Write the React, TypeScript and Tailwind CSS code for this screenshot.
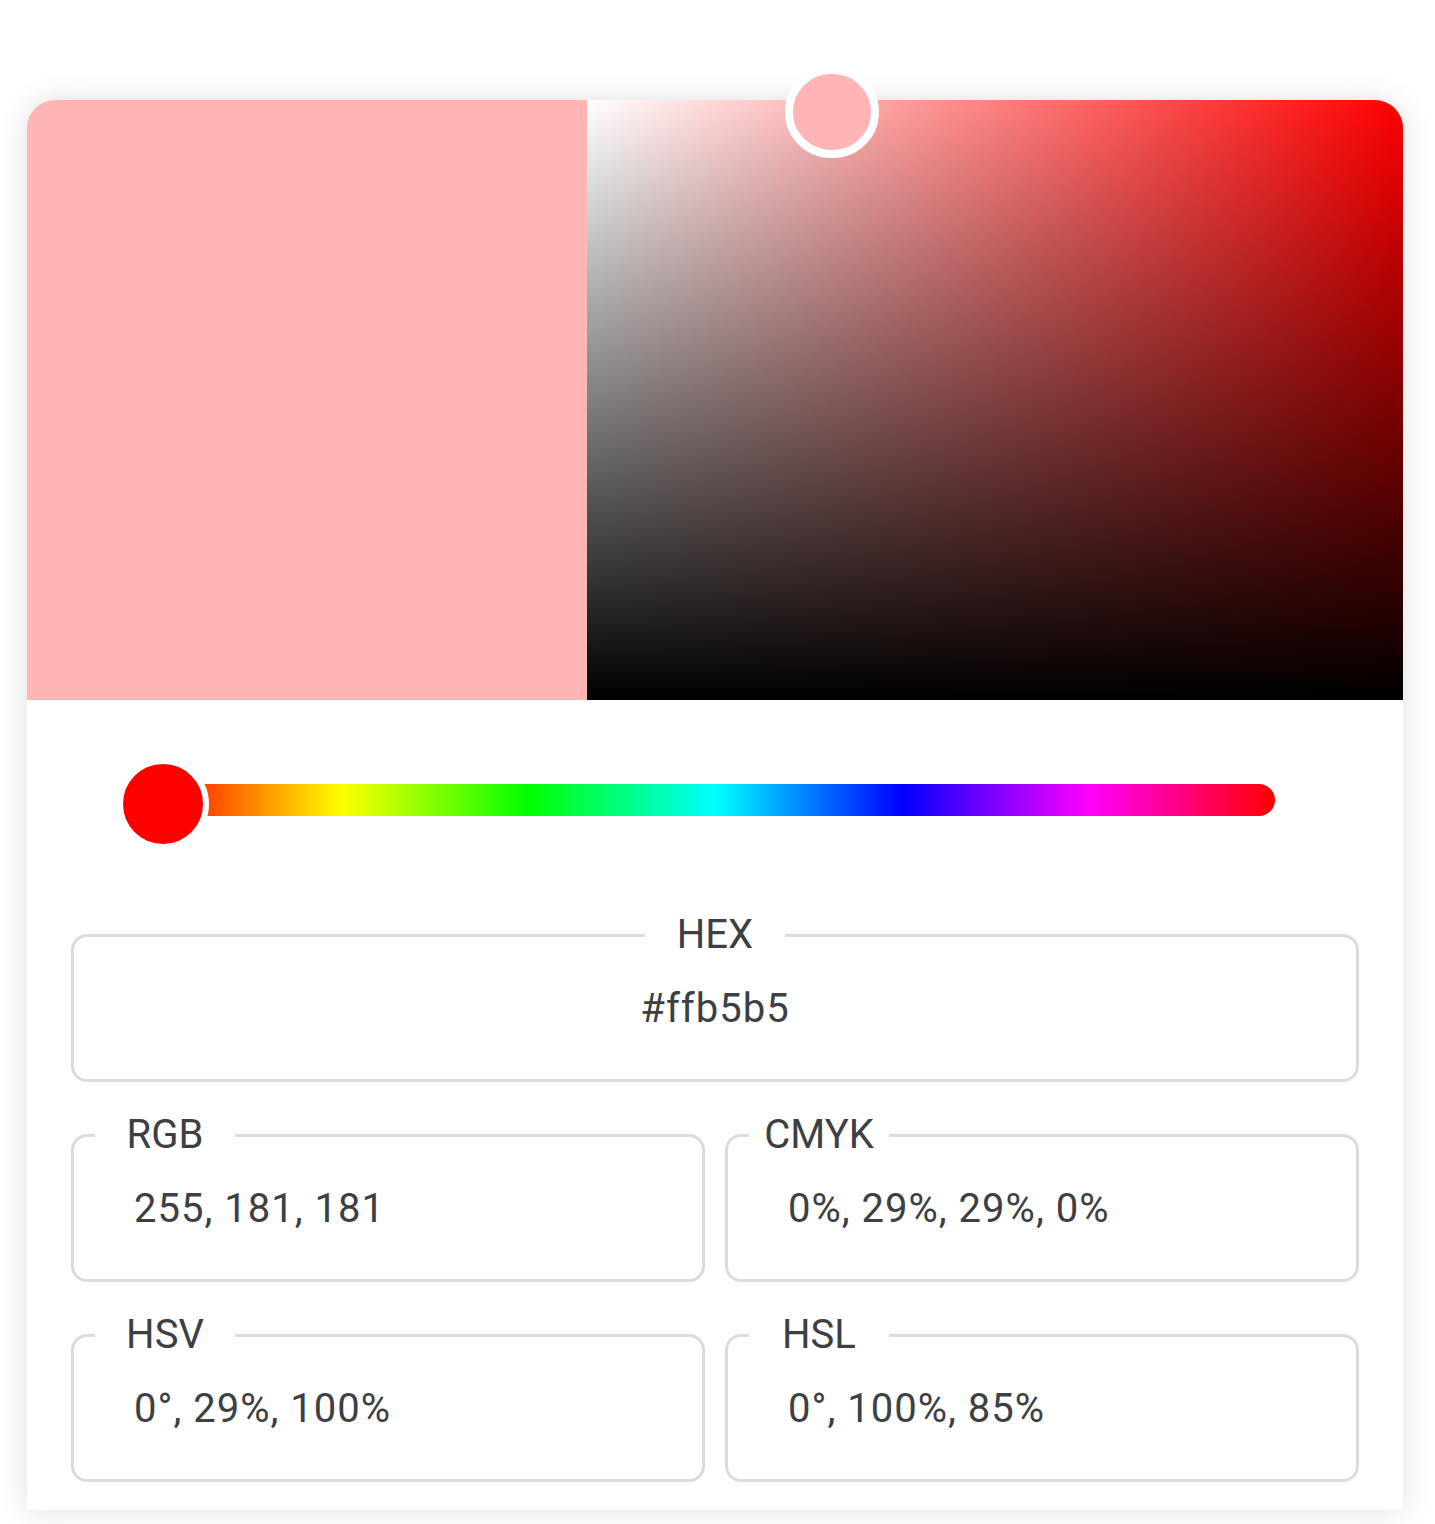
import React from 'react';

const fields = [
  { label: 'RGB', value: '255, 181, 181' },
  { label: 'CMYK', value: '0%, 29%, 29%, 0%' },
  { label: 'HSV', value: '0°, 29%, 100%' },
  { label: 'HSL', value: '0°, 100%, 85%' },
];

const Field: React.FC<{ label: string; value: string; center?: boolean }> = ({ label, value, center }) => (
  <fieldset className="border-[3px] border-[#dadce0] rounded-[16px]">
    <legend className={`p-0 text-[40px] leading-[40px] text-[#3c4043] ${center ? 'mx-auto' : 'ml-[21px]'}`}>
      <span className="block w-[140px] text-center">{label}</span>
    </legend>
    <div
      className={`h-[124px] pt-[34px] text-[40px] leading-[40px] tracking-[1px] text-[#3c4043] ${
        center ? 'text-center' : 'pl-[60px]'
      }`}
    >
      {value}
    </div>
  </fieldset>
);

export default function App() {
  return (
    <div className="min-h-screen bg-white pt-[100px] font-['Roboto',sans-serif]">
      <div className="relative ml-[27px] w-[1376px] bg-white rounded-t-[28px] shadow-[0_0_30px_rgba(0,0,0,0.13)] pb-[28px]">
        {/* colour area */}
        <div className="flex h-[600px] rounded-t-[28px] overflow-hidden">
          <div className="w-[560px] bg-[#ffb5b5]" />
          <div className="relative flex-1 bg-[#ff0000]">
            <div className="absolute inset-0 bg-[linear-gradient(to_right,#ffffff,rgba(255,255,255,0))]" />
            <div className="absolute inset-0 bg-[linear-gradient(to_bottom,rgba(0,0,0,0),#000000)]" />
          </div>
        </div>
        <div className="absolute left-[758px] top-[-34px] w-[94px] h-[92px] rounded-full border-[8px] border-white bg-[#ffb5b5]" />

        {/* hue slider */}
        <div className="relative mx-[128px] mt-[84px] h-[32px] rounded-full bg-[linear-gradient(to_right,#f00_0%,#ff0_16.67%,#0f0_33.33%,#0ff_50%,#00f_66.67%,#f0f_83.33%,#f00_100%)]">
          <div className="absolute left-[-38px] top-[-26px] w-[92px] h-[92px] rounded-full border-[6px] border-white bg-[#ff0000]" />
        </div>

        {/* values */}
        <div className="px-[44px] mt-[99px] flex flex-col gap-[33px]">
          <Field label="HEX" value="#ffb5b5" center />
          <div className="grid grid-cols-2 gap-x-[20px] gap-y-[33px]">
            {fields.map((f) => (
              <Field key={f.label} label={f.label} value={f.value} />
            ))}
          </div>
        </div>
      </div>
    </div>
  );
}
